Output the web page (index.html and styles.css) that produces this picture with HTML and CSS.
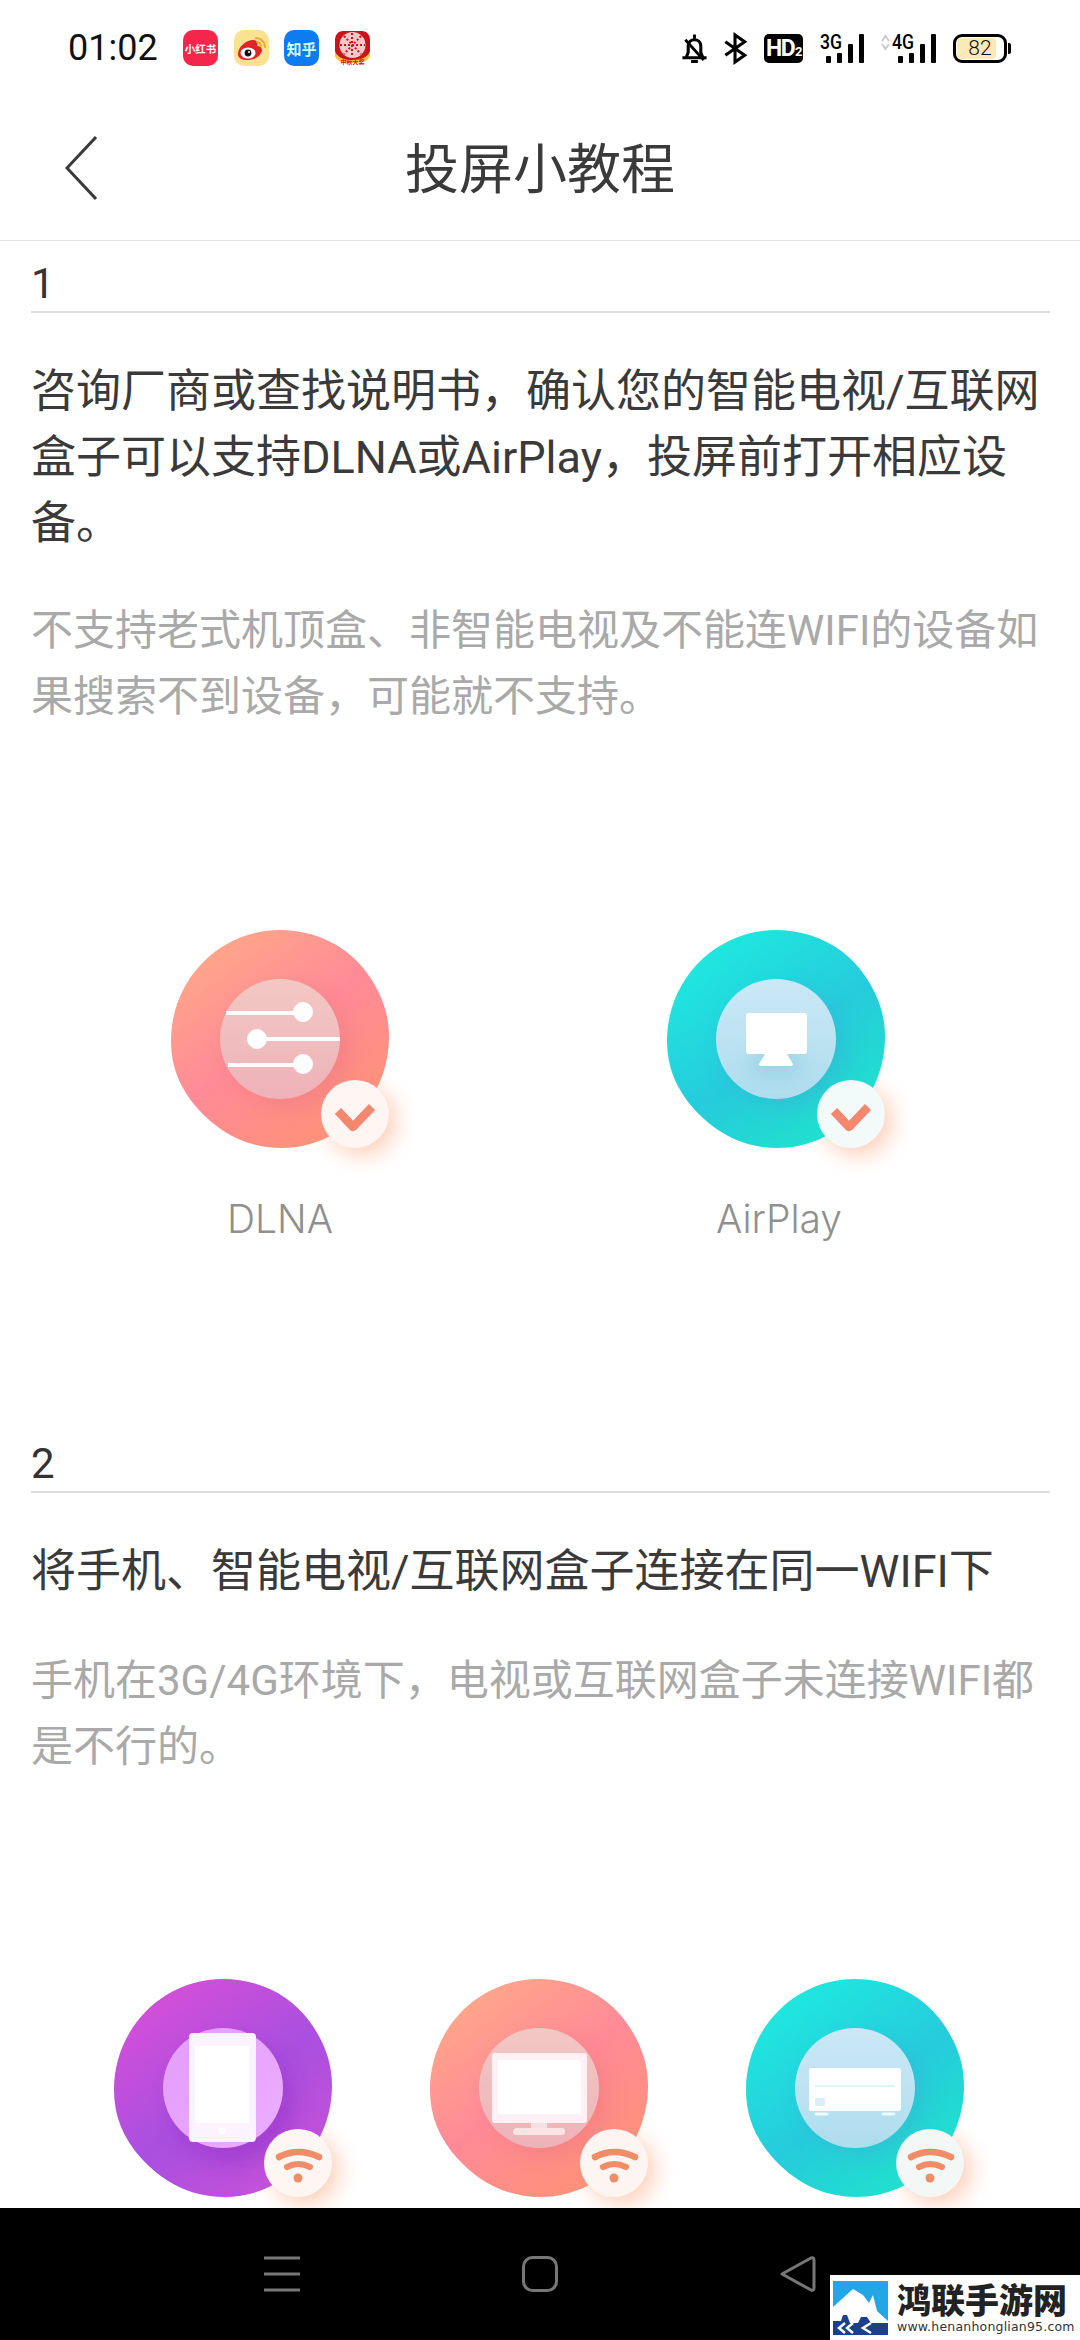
FILE: index.html
```html
<!DOCTYPE html>
<html lang="zh-CN">
<head>
<meta charset="utf-8">
<title>投屏小教程</title>
<link rel="stylesheet" href="styles.css">
</head>
<body>
<svg class="defs" aria-hidden="true">
  <defs>
    <linearGradient id="gPink" x1="0.15" y1="0.05" x2="0.8" y2="0.95"><stop offset="0" stop-color="#ffa888"/><stop offset="0.5" stop-color="#ff8a97"/><stop offset="1" stop-color="#ff9276"/></linearGradient>
    <linearGradient id="gTeal" x1="0.15" y1="0.05" x2="0.8" y2="0.95"><stop offset="0" stop-color="#1eeadf"/><stop offset="0.55" stop-color="#26cbdc"/><stop offset="1" stop-color="#20e2cc"/></linearGradient>
    <linearGradient id="gPurple" x1="0.15" y1="0.05" x2="0.8" y2="0.95"><stop offset="0" stop-color="#d64fd8"/><stop offset="0.55" stop-color="#a94fdf"/><stop offset="1" stop-color="#c552d8"/></linearGradient>
    <linearGradient id="dPink" x1="0.5" y1="0" x2="0.5" y2="1"><stop offset="0" stop-color="#f2c8c4"/><stop offset="1" stop-color="#eeb2b8"/></linearGradient>
    <linearGradient id="dTeal" x1="0.5" y1="0" x2="0.5" y2="1"><stop offset="0" stop-color="#cbe8f6"/><stop offset="1" stop-color="#aeddee"/></linearGradient>
    <linearGradient id="dPurple" x1="0.2" y1="0.2" x2="0.9" y2="0.7"><stop offset="0" stop-color="#e4a0fb"/><stop offset="1" stop-color="#eaaaff"/></linearGradient>
    <filter id="blur14" x="-60%" y="-60%" width="220%" height="220%"><feGaussianBlur stdDeviation="11"/></filter>
    <path id="blob" d="M140 31C175 31 208 47 227 74C242 95 249 115 249 138C249 200 200 249 142 249C105 249 78 232 58 210C40 190 31 168 31 142C31 80 80 31 140 31Z"/>
    <g id="badgeShadow"><circle cx="222" cy="222" r="34" fill="#ffac86" opacity="0.6" filter="url(#blur14)"/></g>
    <g id="check"><path d="M198 212 L213 228 L232 208" fill="none" stroke="#f4876e" stroke-width="8.500" stroke-linejoin="round"/></g>
    <g id="wifi" fill="none" stroke="#f08c66" stroke-linecap="round">
      <path d="M196 209 Q215 199 236 209" stroke-width="6.500"/>
      <path d="M204 219 Q215 213 227 219" stroke-width="6"/>
      <circle cx="215" cy="230" r="4.500" fill="#f08c66" stroke="none"/>
    </g>
  </defs>
</svg>
<div class="app">
  <div class="status">
    <span class="time">01:02</span>
    <div class="apps">
      <span class="app-ico ico-red">小红书</span>
      <svg class="app-svg" viewBox="0 0 35 36"><rect width="35" height="36" rx="10" fill="#fbe192"/><path d="M4 24C4 17 12 10 19 10C24 10 24 14 23 16C28 16 29 20 27 23C25 28 18 30 13 30C8 30 4 28 4 24Z" fill="#e0242a"/><ellipse cx="14" cy="23" rx="7.500" ry="5.500" fill="#fff"/><circle cx="14" cy="23" r="3.400" fill="#111"/><circle cx="15" cy="22" r="1" fill="#fff"/><path d="M22 8C27 8 31 12 31 17M23 12C25 12 27 14 27 16" fill="none" stroke="#f2a530" stroke-width="2" stroke-linecap="round"/></svg>
      <span class="app-ico ico-blue">知乎</span>
      <svg class="app-svg" viewBox="0 0 35 36"><path d="M8 1H27C32 1 35 5 35 10V20C35 26 31 30 26 30H9C4 30 0 26 0 20V10C0 5 3 1 8 1Z" fill="#c8141c"/><path d="M0 22C3 27 8 30 17 30C27 30 32 27 35 22V26C33 31 28 33 17 33C7 33 2 31 0 26Z" fill="#f7c23e"/><circle cx="17.500" cy="15" r="13" fill="#f4c9c9"/><path d="M17 3V27M5 15H30M9 6L26 24M26 6L9 24" stroke="#c8141c" stroke-width="2" stroke-dasharray="2 2"/><text x="17.500" y="34" class="tiny">中秋大奖</text></svg>
    </div>
    <div class="sys">
      <svg class="s-bell" viewBox="0 0 25 30"><path d="M4 24L6 19V12.500C6 8.500 9 6 12.500 6C16 6 19 8.500 19 12.500V19L21 24" fill="none" stroke="#000" stroke-width="3.200" stroke-linejoin="round"/><path d="M12.500 0.500V5M0 24.500H25M9 28.500H16M3 6L22 27" stroke="#000" stroke-width="3"/></svg>
      <svg class="s-bt" viewBox="0 0 23 30"><path d="M1 8L21 22L11 29V1L21 8L1 22" fill="none" stroke="#000" stroke-width="3.200"/></svg>
      <span class="s-hd">HD<small>2</small></span>
      <svg class="s-3g" viewBox="0 0 44 29"><text x="0" y="15" class="net" textLength="22" lengthAdjust="spacingAndGlyphs">3G</text><rect x="6" y="22" width="5" height="7" rx="1"/><rect x="17" y="19" width="5" height="10" rx="1"/><rect x="28" y="10" width="5" height="19" rx="1"/><rect x="39" y="0" width="5" height="29" rx="1"/></svg>
      <svg class="s-4g" viewBox="0 0 55 29"><path d="M1 7L4.500 2L8 7M1 10L4.500 15L8 10" fill="none" stroke="#ccc" stroke-width="2"/><text x="11" y="15" class="net" textLength="22" lengthAdjust="spacingAndGlyphs">4G</text><rect x="17" y="22" width="5" height="7" rx="1"/><rect x="28" y="19" width="5" height="10" rx="1"/><rect x="39" y="10" width="5" height="19" rx="1"/><rect x="50" y="0" width="5" height="29" rx="1"/></svg>
      <div class="battery"><div class="bat-body"><span class="bat-fill"></span><span class="bat-num">82</span></div><span class="bat-nub"></span></div>
    </div>
  </div>
  <header class="head">
    <svg class="back" viewBox="0 0 32 64"><path d="M31 1L2 32L31 63" fill="none" stroke="#3a3a3a" stroke-width="3"/></svg>
    <h1 class="title">投屏小教程</h1>
  </header>
  <main class="content">
    <section class="sec">
      <div class="num">1</div>
      <p class="lead">咨询厂商或查找说明书，确认您的智能电视/互联网盒子可以支持DLNA或AirPlay，投屏前打开相应设备。</p>
      <p class="note">不支持老式机顶盒、非智能电视及不能连WIFI的设备如果搜索不到设备，可能就不支持。</p>
      <div class="icons icons-two">
        <figure class="fig">
          <svg class="art" viewBox="0 0 280 280">
            <use href="#badgeShadow"/>
            <use href="#blob" fill="url(#gPink)"/>
            <circle cx="150" cy="150" r="60" fill="#e8727e" opacity="0.4" filter="url(#blur14)"/>
            <circle cx="140" cy="140" r="60" fill="url(#dPink)"/>
            <g fill="#fff" stroke="#fff">
              <path d="M86 114H157M127 140H200M88 166H157" stroke-width="4" fill="none"/>
              <circle cx="163" cy="113" r="9.500"/><circle cx="117" cy="140" r="9.500"/><circle cx="163" cy="165" r="9.500"/>
            </g>
            <circle cx="215" cy="215" r="34" fill="#fff6f3"/>
            <use href="#check"/>
          </svg>
          <figcaption class="cap">DLNA</figcaption>
        </figure>
        <figure class="fig">
          <svg class="art" viewBox="0 0 280 280">
            <use href="#badgeShadow"/>
            <use href="#blob" fill="url(#gTeal)"/>
            <circle cx="150" cy="150" r="60" fill="#3aa9d0" opacity="0.4" filter="url(#blur14)"/>
            <circle cx="140" cy="140" r="60" fill="url(#dTeal)"/>
            <ellipse cx="140" cy="164" rx="28" ry="12" fill="#7cc6dc" opacity="0.6" filter="url(#blur14)"/>
            <rect x="110" y="114" width="61" height="41" rx="3" fill="#fff"/>
            <path d="M129 155H151L157 165Q157 167 155 167H125Q123 167 123 165Z" fill="#fff"/>
            <circle cx="215" cy="215" r="34" fill="#f2fafa"/>
            <use href="#check"/>
          </svg>
          <figcaption class="cap cap-air">AirPlay</figcaption>
        </figure>
      </div>
    </section>
    <section class="sec sec-two">
      <div class="num">2</div>
      <p class="lead">将手机、智能电视/互联网盒子连接在同一WIFI下</p>
      <p class="note note-two">手机在3G/4G环境下，电视或互联网盒子未连接WIFI都是不行的。</p>
      <div class="icons icons-three">
        <svg class="art" viewBox="0 0 280 280">
          <use href="#badgeShadow"/>
          <use href="#blob" fill="url(#gPurple)"/>
          <circle cx="150" cy="155" r="60" fill="#8a2cc4" opacity="0.45" filter="url(#blur14)"/>
          <circle cx="140" cy="140" r="60" fill="url(#dPurple)"/>
          <rect x="106" y="85" width="67" height="109" rx="4" fill="#fbf3ff"/>
          <rect x="112" y="98" width="54" height="77" fill="#fff"/>
          <circle cx="139" cy="183" r="3.500" fill="#fff"/>
          <circle cx="215" cy="215" r="34" fill="#fdf6f3"/>
          <use href="#wifi"/>
        </svg>
        <svg class="art" viewBox="0 0 280 280">
          <use href="#badgeShadow"/>
          <use href="#blob" fill="url(#gPink)"/>
          <circle cx="150" cy="150" r="60" fill="#e8727e" opacity="0.4" filter="url(#blur14)"/>
          <circle cx="140" cy="140" r="60" fill="url(#dPink)"/>
          <rect x="93" y="105" width="95" height="70" rx="3" fill="#fdf1f6"/>
          <rect x="99" y="112" width="83" height="54" rx="2" fill="#fff"/>
          <rect x="132" y="175" width="16" height="5" fill="#f6dfe2"/>
          <rect x="114" y="180" width="52" height="7" rx="3.500" fill="#f9e4e6"/>
          <circle cx="215" cy="215" r="34" fill="#fdf5f1"/>
          <use href="#wifi"/>
        </svg>
        <svg class="art" viewBox="0 0 280 280">
          <use href="#badgeShadow"/>
          <use href="#blob" fill="url(#gTeal)"/>
          <circle cx="150" cy="150" r="60" fill="#3aa9d0" opacity="0.35" filter="url(#blur14)"/>
          <circle cx="140" cy="140" r="60" fill="url(#dTeal)"/>
          <rect x="94" y="120" width="92" height="43" rx="3" fill="#fff"/>
          <path d="M100 138H180" stroke="#d4f2f4" stroke-width="1.500"/>
          <rect x="100" y="150" width="10" height="8" rx="2" fill="#d8eef4"/>
          <path d="M101 166H112M168 166H179" stroke="#eefafc" stroke-width="3" stroke-linecap="round"/>
          <circle cx="215" cy="215" r="34" fill="#f3f8f6"/>
          <use href="#wifi"/>
        </svg>
      </div>
    </section>
  </main>
  <nav class="nav">
    <svg class="nav-ico" viewBox="0 0 36 36"><path d="M0 2H36M0 18H36M0 34H36" stroke="#777" stroke-width="3"/></svg>
    <svg class="nav-ico" viewBox="0 0 36 36"><rect x="1.500" y="1.500" width="33" height="33" rx="9" fill="none" stroke="#777" stroke-width="3"/></svg>
    <svg class="nav-ico" viewBox="0 0 36 36"><path d="M2 18L31 2Q34 1 34 4V32Q34 35 31 34Z" fill="none" stroke="#777" stroke-width="3" stroke-linejoin="round"/></svg>
  </nav>
  <div class="mark">
    <svg class="mark-logo" viewBox="0 0 55 54"><rect width="55" height="54" fill="#23a6e6"/><path d="M0 26L20 8L30 14L36 22L40 14L44 30L55 40V54H0Z" fill="#fff"/><path d="M0 40H8L10 34H14L17 42H25L28 36H34L38 42H55V54H0Z" fill="#1c3f8f"/><path d="M12 42L6 47L12 52M20 42L14 47L20 52M38 42L30 47L38 52" fill="none" stroke="#fff" stroke-width="2.500"/><path d="M47 14L51 22L47 28" fill="none" stroke="#23a6e6" stroke-width="2"/></svg>
    <div class="mark-text">
      <span class="mark-name">鸿联手游网</span>
      <span class="mark-url">www.henanhonglian95.com</span>
    </div>
  </div>
</div>
</body>
</html>
```

FILE: styles.css
```css
* { box-sizing: border-box; }
html, body { margin: 0; padding: 0; background: #fff; }
body { font-family: Roboto, "Noto Sans CJK SC", sans-serif; }
.defs { display: block; width: 0; height: 0; overflow: hidden; }
.app { position: relative; display: flex; flex-direction: column; width: 1080px; height: 2340px; overflow: hidden; background: #fff; }

.status { display: flex; align-items: center; flex: 0 0 96px; padding: 0 69px 0 68px; }
.time { font-size: 36px; color: #111; width: 88px; }
.apps { display: flex; align-items: center; gap: 15.5px; margin-left: 27px; }
.app-ico { display: flex; align-items: center; justify-content: center; width: 35px; height: 36px; border-radius: 10px; color: #fff; font-weight: 700; white-space: nowrap; }
.ico-red { background: #f4264b; font-size: 10.5px; }
.ico-blue { background: #0c7cf0; font-size: 15px; color: #d6fbff; }
.app-svg { width: 35px; height: 36px; display: block; overflow: visible; }
.tiny { font-size: 6px; font-weight: 700; fill: #c8141c; text-anchor: middle; }
.sys { display: flex; align-items: center; gap: 17px; margin-left: auto; }
.sys svg { display: block; height: 29px; overflow: visible; }
.s-bell { width: 25px; }
.s-bt { width: 23px; }
.s-3g { width: 44px; }
.s-4g { width: 55px; }
.net { font-size: 20px; font-weight: 500; fill: #000; font-family: Roboto, sans-serif; }
.s-hd { display: flex; align-items: baseline; justify-content: center; width: 39px; height: 29px; border-radius: 5px; background: #000; color: #fff; font: 700 23px/29px Roboto, sans-serif; letter-spacing: -1.5px; }
.s-hd small { font-size: 13px; margin-left: 1px; }
.battery { display: flex; align-items: center; gap: 1px; }
.bat-body { position: relative; display: flex; align-items: center; justify-content: center; width: 54px; height: 29px; border: 3px solid #000; border-radius: 9px; overflow: hidden; }
.bat-fill { position: absolute; left: 1px; top: 1px; bottom: 1px; width: 39px; background: #fbe9b8; border-radius: 4px; }
.bat-num { position: relative; font-size: 21px; font-weight: 300; color: #111; }
.bat-nub { width: 3px; height: 11px; background: #000; border-radius: 0 2px 2px 0; }

.head { display: grid; grid-template-columns: 1fr auto 1fr; align-items: center; flex: 0 0 145px; padding-left: 65px; border-bottom: 1px solid #e4e4e4; }
.back { width: 32px; height: 64px; display: block; }
.title { grid-column: 2; margin: 6px 65px 0 0; font-size: 54px; font-weight: 400; line-height: 70px; color: #3a3a3a; }

.content { flex: 1; min-height: 0; overflow: hidden; }
.sec { padding: 0 30px 0 31px; }
.sec-two { margin-top: 172px; }
.num { height: 72px; padding-top: 21px; font-size: 42px; line-height: 44px; color: #333; border-bottom: 2px solid #ddd; }
.lead { margin: 46px 0 0; font-size: 45px; line-height: 66px; color: #3a3a3a; }
.note { margin: 41px 0 0; font-size: 42px; line-height: 66px; color: #a9a9a9; }
.note-two { margin-top: 43px; }
.icons { display: flex; margin-left: -31px; }
.icons-two { gap: 216px; padding: 169px 0 0 140px; }
.icons-three { gap: 36px; padding: 168px 0 0 83px; }
.fig { margin: 0; width: 280px; }
.art { display: block; width: 280px; height: 280px; flex: none; overflow: visible; }
.cap { margin-top: 10px; font-family: Inter, Roboto, sans-serif; font-size: 39px; line-height: 60px; font-weight: 300; text-align: center; color: #8f8f8f; }
.cap-air { padding-left: 6px; }

.nav { display: flex; align-items: center; gap: 222px; flex: 0 0 132px; padding-left: 264px; background: #000; position: relative; z-index: 1; }
.nav-ico { width: 36px; height: 36px; display: block; }

.mark { position: absolute; right: 0; bottom: 0; z-index: 2; display: flex; align-items: center; gap: 9px; width: 250px; height: 65px; padding-left: 3px; background: #fff; }
.mark-logo { width: 55px; height: 54px; display: block; flex: none; }
.mark-text { display: flex; flex-direction: column; }
.mark-name { font-size: 34px; line-height: 38px; font-weight: 900; color: #222; white-space: nowrap; }
.mark-url { font: 12.5px/14px "DejaVu Sans", sans-serif; letter-spacing: 0.2px; color: #333; white-space: nowrap; }
```
